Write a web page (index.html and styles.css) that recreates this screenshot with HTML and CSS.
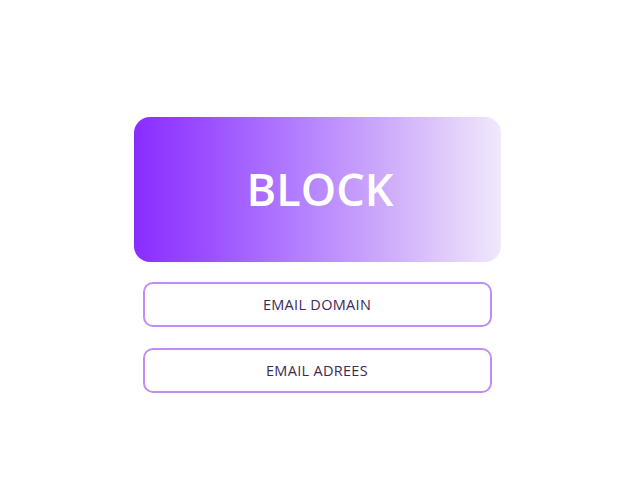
FILE: index.html
```html
<!DOCTYPE html>
<html>
<head>
<meta charset="utf-8">
<link rel="stylesheet" href="styles.css">
</head>
<body>
<main class="stack">
  <div class="block">BLOCK</div>
  <button class="option">EMAIL DOMAIN</button>
  <button class="option">EMAIL ADREES</button>
</main>
</body>
</html>
```
FILE: styles.css
```css
html, body {
  margin: 0;
  padding: 0;
  background: #ffffff;
}
body {
  width: 634px;
  height: 480px;
  font-family: "Open Sans", "Noto Sans", sans-serif;
}
.stack {
  display: flex;
  flex-direction: column;
  align-items: center;
  padding-top: 117px;
}
.block {
  width: 367px;
  height: 145px;
  box-sizing: border-box;
  border-radius: 16px;
  background: linear-gradient(90deg, #8a2cff 0%, #9b4fff 20%, #b37fff 45%, #cfaefa 70%, #f1e8fc 100%);
  color: #ffffff;
  display: flex;
  align-items: center;
  justify-content: center;
  font-size: 45px;
  font-weight: 600;
  letter-spacing: 0;
  padding-bottom: 3px;
  padding-left: 6px;
}
.option {
  width: 349px;
  height: 45px;
  box-sizing: border-box;
  border: 2px solid #c08cf7;
  border-radius: 10px;
  background: #ffffff;
  color: #3b2a5a;
  font-family: "Open Sans", "Noto Sans", sans-serif;
  font-size: 14.5px;
  letter-spacing: 0.3px;
  margin-top: 20px;
  padding: 0;
}
.option + .option {
  margin-top: 21px;
}
```
